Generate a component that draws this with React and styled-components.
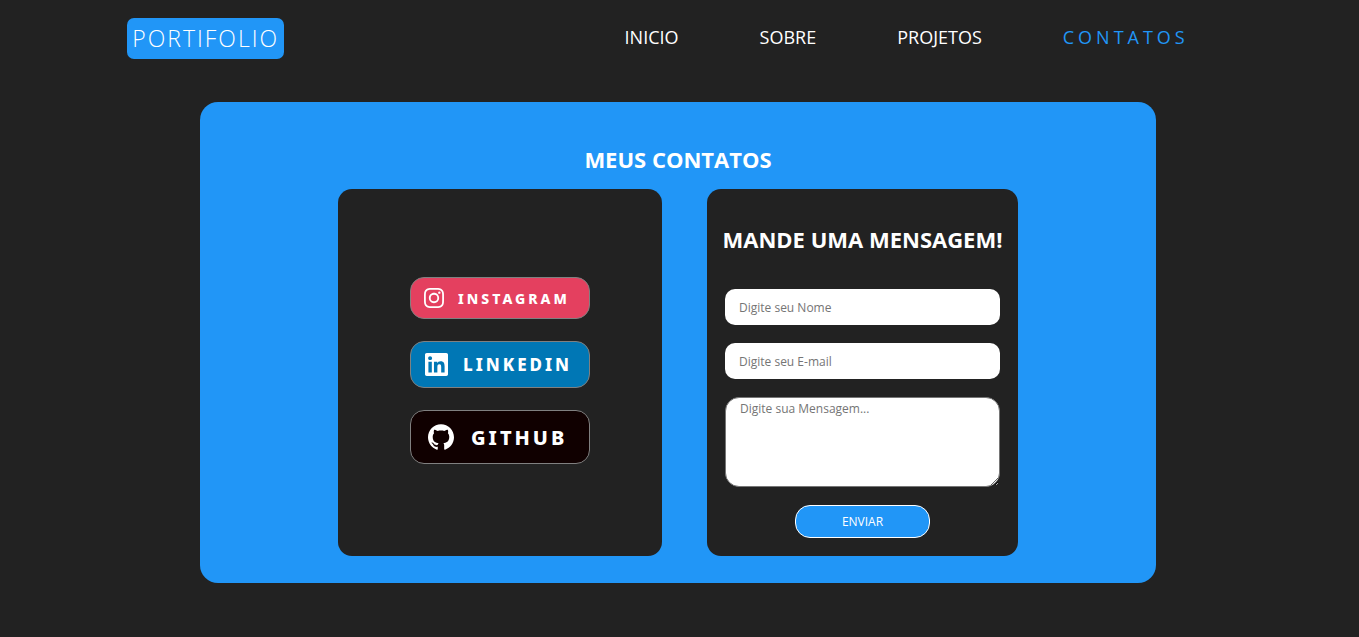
import React from "react";
import styled, { createGlobalStyle } from "styled-components";
import { SiInstagram, SiGithub } from "react-icons/si";

const blue = "#2196f7";
const dark = "#222222";

const GlobalStyle = createGlobalStyle`
  * { box-sizing: border-box; }
  body {
    margin: 0;
    background: ${dark};
    color: #fff;
    font-family: "Segoe UI", "Open Sans", sans-serif;
  }
`;

const Header = styled.header`
  display: flex;
  justify-content: space-around;
  align-items: flex-start;
  padding-top: 18px;
`;

const Logo = styled.a`
  padding: 0 5px;
  border-radius: 7px;
  background: ${blue};
  color: #fff;
  font-size: 23px;
  font-weight: 300;
  line-height: 41px;
  letter-spacing: 2px;
  text-decoration: none;
`;

const Nav = styled.nav`
  display: flex;
  gap: 81px;
  padding: 7px 43px 0 86px;
`;

const NavLink = styled.a`
  color: ${(p) => (p.$active ? blue : "#fff")};
  font-size: 18px;
  line-height: 24px;
  letter-spacing: ${(p) => (p.$active ? "4px" : "normal")};
  text-decoration: none;
`;

const Card = styled.main`
  margin: 43px 203px 54px 200px;
  padding: 42px 138px 27px;
  border-radius: 18px;
  background: ${blue};
`;

const Title = styled.h2`
  margin: 0;
  font-size: 22px;
  font-weight: 700;
  line-height: 30px;
  text-align: center;
  white-space: nowrap;
`;

const Panels = styled.div`
  display: flex;
  gap: 45px;
  margin-top: 15px;
`;

const Panel = styled.section`
  display: flex;
  flex-direction: column;
  border-radius: 14px;
  background: ${dark};
`;

const SocialPanel = styled(Panel)`
  flex: 1;
  align-items: center;
  justify-content: center;
  gap: 22px;
  padding-bottom: 4px;
`;

const FormPanel = styled(Panel)`
  flex: 0 0 311px;
  padding: 35px 14px 18px;
`;

const Badge = styled.a`
  display: flex;
  align-items: center;
  width: 180px;
  height: ${(p) => p.$height}px;
  padding-left: ${(p) => p.$pad}px;
  gap: ${(p) => p.$gap}px;
  border: 1px solid #808080;
  border-radius: 14px;
  background: ${(p) => p.$color};
  color: #fff;
  font-family: Verdana, "Noto Sans", "DejaVu Sans", sans-serif;
  font-size: ${(p) => p.$size}px;
  font-weight: 800;
  letter-spacing: 3px;
  text-decoration: none;
`;

const Form = styled.form`
  display: flex;
  flex-direction: column;
  gap: 18px;
  margin-top: 35px;
  padding: 0 4px;
`;

const Input = styled.input`
  width: 100%;
  height: 36px;
  padding: 0 14px;
  border: none;
  border-radius: 10px;
  background: #fff;
  font-family: inherit;
  font-size: 12px;
  &::placeholder { color: #757575; }
`;

const Message = styled.textarea`
  display: block;
  width: 100%;
  height: 90px;
  padding: 3px 14px;
  border: 1px solid #767676;
  border-radius: 14px;
  background: #fff;
  font-family: inherit;
  font-size: 12px;
  line-height: 16px;
  &::placeholder { color: #757575; }
`;

const Submit = styled.button`
  align-self: center;
  width: 135px;
  height: 33px;
  padding: 0;
  border: 1px solid #fff;
  border-radius: 15px;
  background: ${blue};
  color: #fff;
  font-family: inherit;
  font-size: 12px;
`;

const LinkedinIcon = ({ size }) => (
  <svg width={size} height={size} viewBox="0 0 24 24" fill="currentColor" aria-hidden="true">
    <path d="M20.447 20.452h-3.554v-5.569c0-1.328-.027-3.037-1.852-3.037-1.853 0-2.136 1.445-2.136 2.939v5.667H9.351V9h3.414v1.561h.046c.477-.9 1.637-1.85 3.37-1.85 3.601 0 4.267 2.37 4.267 5.455v6.286zM5.337 7.433c-1.144 0-2.063-.926-2.063-2.065 0-1.138.92-2.063 2.063-2.063 1.14 0 2.064.925 2.064 2.063 0 1.139-.925 2.065-2.064 2.065zm1.782 13.019H3.555V9h3.564v11.452zM22.225 0H1.771C.792 0 0 .774 0 1.729v20.542C0 23.227.792 24 1.771 24h20.451C23.2 24 24 23.227 24 22.271V1.729C24 .774 23.2 0 22.222 0h.003z" />
  </svg>
);

export default function App() {
  return (
    <>
      <GlobalStyle />
      <Header>
        <Logo href="#">PORTIFOLIO</Logo>
        <Nav>
          <NavLink href="#inicio">INICIO</NavLink>
          <NavLink href="#sobre">SOBRE</NavLink>
          <NavLink href="#projetos">PROJETOS</NavLink>
          <NavLink href="#contatos" $active>CONTATOS</NavLink>
        </Nav>
      </Header>
      <Card>
        <Title>MEUS CONTATOS</Title>
        <Panels>
          <SocialPanel>
            <Badge href="#instagram" $color="#e4405f" $height={42} $pad={13} $gap={14} $size={14}>
              <SiInstagram size={20} />
              INSTAGRAM
            </Badge>
            <Badge href="#linkedin" $color="#0077b5" $height={47} $pad={14} $gap={15} $size={17}>
              <LinkedinIcon size={23} />
              LINKEDIN
            </Badge>
            <Badge href="#github" $color="#100000" $height={54} $pad={17} $gap={17} $size={20}>
              <SiGithub size={26} />
              GITHUB
            </Badge>
          </SocialPanel>
          <FormPanel>
            <Title>MANDE UMA MENSAGEM!</Title>
            <Form onSubmit={(e) => e.preventDefault()}>
              <Input type="text" placeholder="Digite seu Nome" aria-label="Nome" />
              <Input type="email" placeholder="Digite seu E-mail" aria-label="E-mail" />
              <Message placeholder="Digite sua Mensagem..." aria-label="Mensagem" />
              <Submit type="submit">ENVIAR</Submit>
            </Form>
          </FormPanel>
        </Panels>
      </Card>
    </>
  );
}
